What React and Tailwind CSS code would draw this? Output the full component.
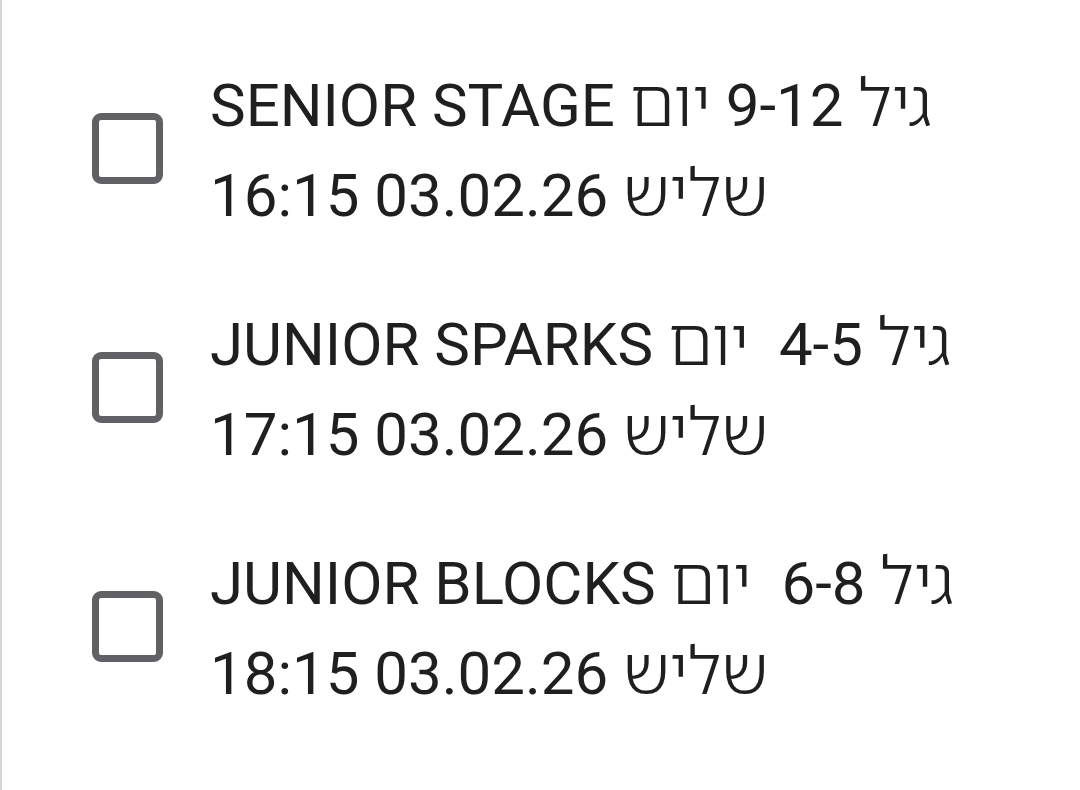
import React from 'react';

const sessions = [
  { age: '9-12', sep: ' ', name: 'SENIOR STAGE', time: '16:15' },
  { age: '4-5', sep: '  ', name: 'JUNIOR SPARKS', time: '17:15' },
  { age: '6-8', sep: '  ', name: 'JUNIOR BLOCKS', time: '18:15' },
];

// Hebrew words get their own face, a touch larger than the Latin text
const Heb = ({ children }) => (
  <span className="text-[66px] font-light leading-none font-['Noto_Sans_Hebrew','DejaVu_Sans',sans-serif]">{children}</span>
);

const App = () => {
  return (
    <div className="min-h-[790px] w-[1080px] bg-white border-l-2 border-[#d6d6d6]">
      <div className="flex flex-col gap-[59px] pl-[90px] pt-[61px] font-['Roboto','Open_Sans',sans-serif]">
        {sessions.map((s) => (
          <label key={s.name} className="flex items-start">
            {/* checkbox */}
            <span className="mt-[52px] block w-[71px] h-[71px] shrink-0 rounded-[9px] border-[7px] border-[#5f6165] bg-white" />
            <div dir="rtl" className="ml-[47px] text-left text-[60px] leading-[90px] text-[#1f1f1f] whitespace-pre">
              <div className="h-[90px]">
                <Heb>גיל</Heb> {s.age}{s.sep}<Heb>יום</Heb> {s.name}
              </div>
              <div className="h-[90px]">
                <Heb>שליש</Heb> 03.02.26 {s.time}
              </div>
            </div>
          </label>
        ))}
      </div>
    </div>
  );
};

export default App;
